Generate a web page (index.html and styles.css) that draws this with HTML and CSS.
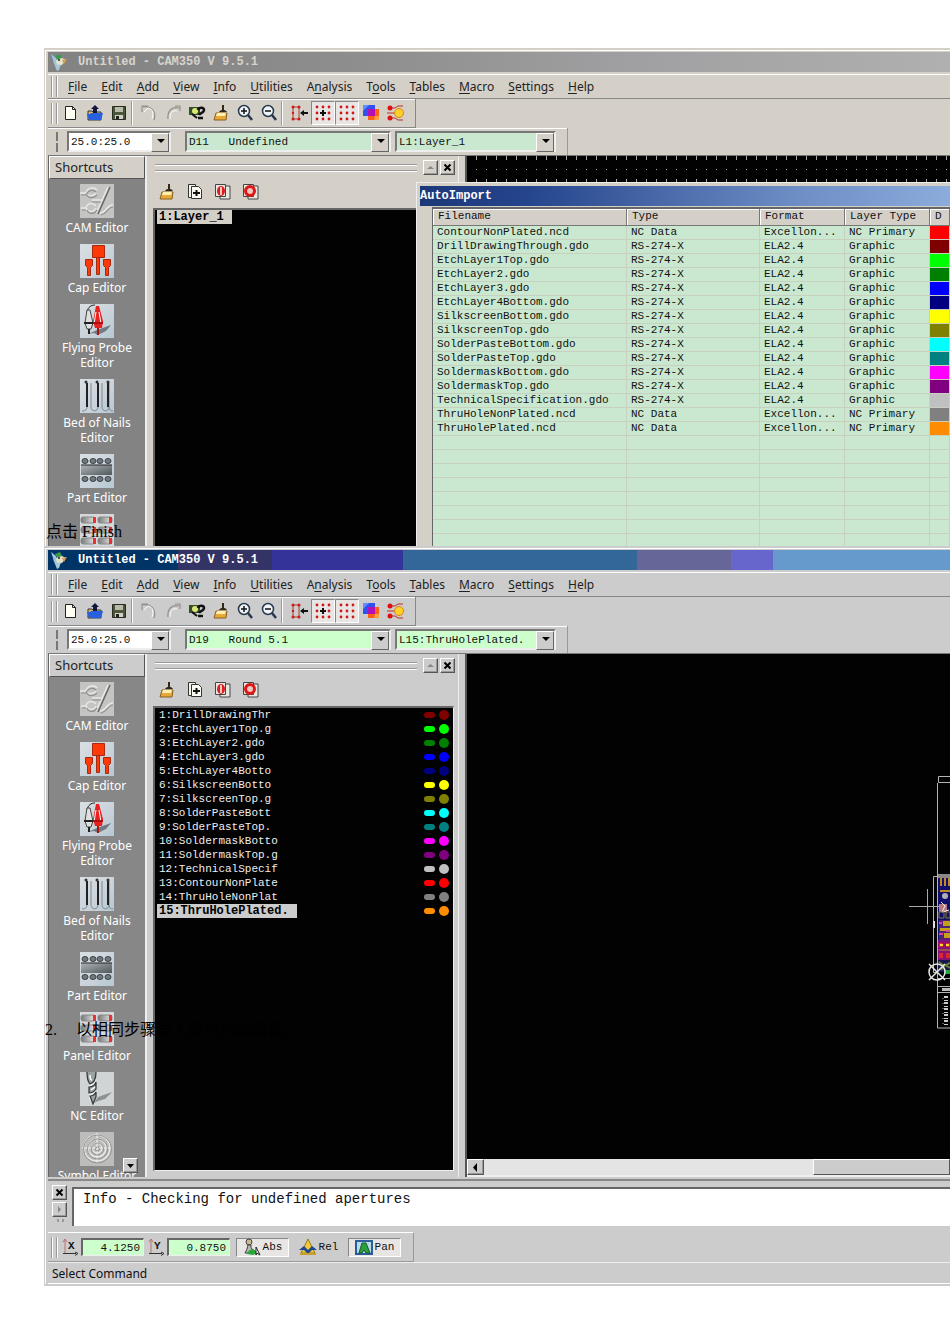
FILE: index.html
```html
<!DOCTYPE html>
<html lang="zh">
<head>
<meta charset="utf-8">
<title>CAM350 import steps</title>
<link rel="stylesheet" href="styles.css">
</head>
<body>
<svg class="sprite" aria-hidden="true">
  <defs>
    <linearGradient id="tile" x1="0" y1="0" x2="1" y2="1"><stop offset="0" stop-color="#d9e0e4"/><stop offset=".6" stop-color="#c9d2da"/><stop offset="1" stop-color="#b4c8d4"/></linearGradient>
    <linearGradient id="metal"><stop offset="0" stop-color="#777"/><stop offset="1" stop-color="#e8e8e8"/></linearGradient>
    <linearGradient id="chip" x1="0" y1="0" x2="1" y2="1"><stop offset="0" stop-color="#aeb4b8"/><stop offset="1" stop-color="#50585c"/></linearGradient>
  </defs>
  <symbol id="i-app" viewBox="0 0 18 18"><path d="M1 1l5 4 3 10-5-5z" fill="#9cc4e4"/><path d="M5 3l5-2 2 4-4 3z" fill="#3c9a4c"/><path d="M6 7l6-2 4 2-4 5-5 1z" fill="#e6e2c8"/><path d="M3 8l5 4 3-1-2 6-2 1z" fill="#a8c8d8"/><path d="M12 7l5-1-3 5z" fill="#d89a48"/><circle cx="9" cy="7" r="1" fill="#222"/></symbol>
  <symbol id="i-new" viewBox="0 0 18 18"><path d="M3.500 2.500h7l3 3v10h-10z" fill="#fffff4" stroke="#222"/><path d="M10.500 2.500v3h3" fill="none" stroke="#222"/></symbol>
  <symbol id="i-open" viewBox="0 0 18 18"><path d="M2 7h4l1 1h8v8H2z" fill="#d8b860" stroke="#333"/><path d="M1 10h3l1-1h12l-2 7H3z" fill="#2860e0"/><path d="M9 1l4 4h-2v4H7V5H5z" fill="#101840"/></symbol>
  <symbol id="i-save" viewBox="0 0 18 18"><path d="M2.500 2.500h13v13h-13z" fill="#4c5638" stroke="#282c20"/><path d="M5 3h8v5H5z" fill="#b8bca8"/><path d="M5 11h8v4H5z" fill="#d0d0c4"/><path d="M6 12h3v3H6z" fill="#222"/></symbol>
  <symbol id="i-undo" viewBox="0 0 18 18"><path d="M2 8V2h6M3 3c7-2 14 4 11 13" fill="none" stroke="#90908c" stroke-width="1.200"/><path d="M4 8l4-4c5 1 6 5 4 11" fill="none" stroke="#fff"/></symbol>
  <symbol id="i-redo" viewBox="0 0 18 18"><path d="M11 2h5v5M15 4C8 2 3 7 4 15" fill="none" stroke="#90908c" stroke-width="1.200"/><path d="M13 7C8 6 6 9 6 15" fill="none" stroke="#fff"/></symbol>
  <symbol id="i-query" viewBox="0 0 18 18"><path d="M1 3h11v8H1z" fill="#354f28"/><circle cx="7" cy="7" r="3" fill="#dbe878"/><path d="M10 6c1-3 6-3 6 0 0 3-4 3-5 5M10 14h5" fill="none" stroke="#111" stroke-width="2.500"/><path d="M4 10l5 4" stroke="#111" stroke-width="2"/></symbol>
  <symbol id="i-broom" viewBox="0 0 18 18"><path d="M4 9h11l-1 7H2z" fill="#e8a838" stroke="#886020"/><path d="M5 9h9l-1 3H4z" fill="#fff0b0"/><path d="M11 1v7" stroke="#332818" stroke-width="2"/><path d="M7 8c2-3 6-3 8 0z" fill="#332818"/></symbol>
  <symbol id="i-zin" viewBox="0 0 18 18"><circle cx="8" cy="7" r="5.500" fill="#eef4f8" stroke="#26384c" stroke-width="1.500"/><path d="M5 7h6M8 4v6" stroke="#111" stroke-width="1.500"/><path d="M12 11l4 5" stroke="#26384c" stroke-width="2.500"/></symbol>
  <symbol id="i-zout" viewBox="0 0 18 18"><circle cx="8" cy="7" r="5.500" fill="#eef4f8" stroke="#26384c" stroke-width="1.500"/><path d="M5 7h6" stroke="#111" stroke-width="1.500"/><path d="M12 11l4 5" stroke="#26384c" stroke-width="2.500"/></symbol>
  <symbol id="i-snap" viewBox="0 0 18 18"><path d="M3 3h6v12H3z" fill="none" stroke="#a84038"/><g fill="#d01818"><circle cx="3" cy="3" r="1.500"/><circle cx="9" cy="3" r="1.500"/><circle cx="3" cy="15" r="1.500"/><circle cx="9" cy="15" r="1.500"/><circle cx="3" cy="9" r="1.200"/></g><path d="M10 9l4-3v2h4v2h-4v2z" fill="#111"/></symbol>
  <symbol id="i-grid" viewBox="0 0 18 18"><path d="M3 3h13M3 9h13M3 15h13" stroke="#d01818" stroke-width="2.800" stroke-dasharray="0 6" stroke-linecap="round"/></symbol>
  <symbol id="i-gridc" viewBox="0 0 18 18"><path d="M3 3h13M3 9h13M3 15h13" stroke="#d01818" stroke-width="2.800" stroke-dasharray="0 6" stroke-linecap="round"/><path d="M6 9h6M9 6v6" stroke="#111" stroke-width="2"/></symbol>
  <symbol id="i-layers" viewBox="0 0 18 18"><path d="M1 1h12v11H1z" fill="#3050f0"/><path d="M1 7l6-6H1z" fill="#6090ff"/><path d="M6 5h11v11H6z" fill="#ff6018"/><path d="M6 5h7v7H6z" fill="#b010b8"/><path d="M13 12h4v4h-5z" fill="#ffa040"/></symbol>
  <symbol id="i-nodes" viewBox="0 0 18 18"><path d="M4 4h5l3-2h5M4 14h5l3 2h5M1 9h8" fill="none" stroke="#b83020"/><circle cx="4" cy="4" r="2.500" fill="#e01010"/><circle cx="4" cy="14" r="2.500" fill="#e01010"/><circle cx="13" cy="9" r="4.500" fill="#ffd028" stroke="#e08018"/></symbol>
  <symbol id="i-addl" viewBox="0 0 18 18"><path d="M2.500 1.500h7v13h-7z" fill="#f4f4e8" stroke="#333"/><path d="M5.500 3.500h7l3 3v9h-10z" fill="#fbfbf4" stroke="#333"/><path d="M7 10h7M10.500 7v6" stroke="#111" stroke-width="2"/></symbol>
  <symbol id="i-redl" viewBox="0 0 18 18"><path d="M1.500 1.500h10v12h-10zM12 3h4v13H6v-2" fill="#e8e8e0" stroke="#444"/><ellipse cx="7" cy="8" rx="4" ry="5" fill="#d82020"/><path d="M7 4v8" stroke="#fff" stroke-width="1.500"/></symbol>
  <symbol id="i-nol" viewBox="0 0 18 18"><path d="M1.500 1.500h10v12h-10zM12 3h4v13H6v-2" fill="#e8e8e0" stroke="#444"/><circle cx="8" cy="8" r="4.500" fill="#f0c8c0" stroke="#dc1818" stroke-width="3"/></symbol>
  <symbol id="i-cam" viewBox="0 0 34 34"><path d="M0 0h34v34H0z" fill="#c4c4c2"/><g fill="none" stroke="#e8e8e8" stroke-width="1.500"><path d="M0 9h6c1-5 7-7 11-3M6 9c2 4 8 3 10 0M1 24h5c1-5 7-6 10-2M6 24c2 5 8 4 10 0M33 21c-6-1-6 8-13 8M28 3L16 29M12 16h10"/></g><g fill="none" stroke="#909090" stroke-width="1.200"><path d="M1 11h5c2-5 7-6 10-3M7 11c2 4 7 3 10 0M2 26h4M7 26c2 5 8 4 10 0M33 23c-5 0-6 7-12 8M12 18h9"/></g><path d="M30 3L18 30" stroke="#666" stroke-width="1.500"/></symbol>
  <symbol id="i-cap" viewBox="0 0 34 34"><path d="M0 0h34v34H0z" fill="url(#tile)"/><g fill="#fb3a08" stroke="#a82810"><path d="M12.500 1.500h12v12h-12zM16.500 13.500h3v17h-3zM5.500 15.500h7v6l-2 2v8h-3v-8l-2-2zM23.500 15.500h7v6l-2 2v8h-3v-8l-2-2z"/></g></symbol>
  <symbol id="i-probe" viewBox="0 0 34 34"><path d="M0 0h34v34H0z" fill="url(#tile)"/><path d="M8 30l9-4 14-5-5 6-8 4-4-2z" fill="#707a80"/><path d="M7 8c1-5 4-7 8-7" fill="none" stroke="#222"/><path d="M7 6h3l3 13-2 6h-4l-2-6z" fill="#e0e0e0" stroke="#444"/><path d="M4 19h9M9 25v5" stroke="#222" stroke-width="2"/><path d="M16 2h3l4 15-1 7h-7l-2-7z" fill="#e82020"/><path d="M16 8l-2 12M19 8l2 12" stroke="#fff"/><path d="M13 19h10M18 24v7" stroke="#b01010" stroke-width="2"/></symbol>
  <symbol id="i-nails" viewBox="0 0 34 34"><path d="M0 0h34v34H0z" fill="url(#tile)"/><path d="M2 32c4 0 5-2 5-4V4M11 4v24c0 5 7 5 7 0V4M22 4v24c0 5 7 5 7 0V4M29 28c0 3 2 4 4 4" fill="none" stroke="#7d878e"/><path d="M7 4v24M18 4v24M28 4v24" stroke="#222" stroke-width="2"/><g fill="#333"><circle cx="6" cy="3" r="1.500"/><circle cx="17" cy="3" r="1.500"/><circle cx="28" cy="3" r="1.500"/></g></symbol>
  <symbol id="i-part" viewBox="0 0 34 34"><path d="M0 0h34v34H0z" fill="url(#tile)"/><path d="M1 11h31v10H1z" fill="url(#chip)"/><path d="M1 11h31" stroke="#222"/><g fill="#727a80" stroke="#3c4448"><ellipse cx="5" cy="7" rx="3" ry="2.500"/><ellipse cx="13" cy="7" rx="3" ry="2.500"/><ellipse cx="20" cy="7" rx="3" ry="2.500"/><ellipse cx="28" cy="7" rx="3" ry="2.500"/><ellipse cx="5" cy="25" rx="3" ry="2.500"/><ellipse cx="13" cy="25" rx="3" ry="2.500"/><ellipse cx="20" cy="25" rx="3" ry="2.500"/><ellipse cx="28" cy="25" rx="3" ry="2.500"/></g></symbol>
  <symbol id="i-panel" viewBox="0 0 34 34"><path d="M0 0h34v34H0z" fill="#d4d8da"/><g fill="url(#metal)" stroke="#888"><rect x="1" y="3" width="14" height="6" rx="2"/><rect x="18" y="3" width="14" height="6" rx="2"/><rect x="1" y="13" width="14" height="6" rx="2"/><rect x="18" y="13" width="14" height="6" rx="2"/><rect x="1" y="24" width="14" height="6" rx="2"/><rect x="18" y="24" width="14" height="6" rx="2"/></g><path d="M13 3h3v6h-3zM29 3h3v6h-3zM13 13h3v6h-3zM29 13h3v6h-3zM13 24h3v6h-3zM29 24h3v6h-3z" fill="#e83030"/></symbol>
  <symbol id="i-nc" viewBox="0 0 34 34"><path d="M0 0h34v34H0z" fill="#d0d4d4"/><path d="M14 31l4-6 14-5-7 7-7 2z" fill="#8c9292"/><path d="M7 0h9v8l-1 6v10l-2 7-4-4V12z" fill="#f0f0f0"/><path d="M7 0c0 6 1 10 3 12 4-1 6-5 6-12M9 15c4 0 6-2 7-5v7c-2 3-4 4-7 4zM10 24c3 0 5-2 6-4v5l-3 7z" fill="#9aa2a2" stroke="#303636" stroke-width="1.200"/><path d="M10 3c0 3 1 5 2 5M11 18l4-3" fill="none" stroke="#fff" stroke-width="1.500"/></symbol>
  <symbol id="i-symbol" viewBox="0 0 34 34"><path d="M0 0h34v34H0z" fill="#bcbcba"/><g fill="none" stroke="#e8e8e8" stroke-width="1.500"><circle cx="17" cy="16" r="13"/><circle cx="17" cy="16" r="9"/><circle cx="17" cy="16" r="5"/><path d="M17 1v30M2 16h30"/></g><g fill="none" stroke="#929292"><circle cx="17.500" cy="17" r="14"/><circle cx="17.500" cy="17" r="10"/><circle cx="17.500" cy="17" r="6"/><circle cx="17.500" cy="17" r="2"/></g></symbol>
  <symbol id="i-x" viewBox="0 0 9 9"><path d="M1.500 1.500l6 6M7.500 1.500l-6 6" stroke="#000" stroke-width="2"/></symbol>
  <symbol id="i-up" viewBox="0 0 9 9"><path d="M1 6l3.500-3L8 6z" fill="#888"/></symbol>
  <symbol id="i-right" viewBox="0 0 9 9"><path d="M3 1l3 3.500L3 8z" fill="#888"/></symbol>
  <symbol id="i-left" viewBox="0 0 9 9"><path d="M6 0L2 4.500 6 9z" fill="#000"/></symbol>
  <symbol id="i-down" viewBox="0 0 9 9"><path d="M1 3h7L4.500 7z" fill="#000"/></symbol>
  <symbol id="i-axis" viewBox="0 0 18 18"><path d="M4 16V2M2 4l2-3 2 3" fill="none" stroke="#b87070"/><path d="M2 15.500h13M14 14l3 1.500-3 2" fill="none" stroke="#333"/></symbol>
  <symbol id="i-abs" viewBox="0 0 18 18"><circle cx="6" cy="4" r="3" fill="#c8b890" stroke="#444"/><path d="M5 7h3v3l6 5H2l2-4z" fill="#b8b8b0" stroke="#444"/><path d="M4 16c3-7 8-5 10-1l-4 2z" fill="#28a838"/><path d="M13 9l4 8-3-2-1 2z" fill="#fff" stroke="#222"/></symbol>
  <symbol id="i-rel" viewBox="0 0 18 18"><path d="M9 1l7 14H2z" fill="#f0c838" stroke="#987818"/><path d="M0 12l5-4 4 4 4-4 5 4-5 0-4 4-4-4z" fill="#204890"/><path d="M1 15h16v2H1z" fill="#c8a030"/></symbol>
  <symbol id="i-pan" viewBox="0 0 18 18"><path d="M0 2h18v15H0z" fill="#2c5c9c"/><path d="M2 4h14v11H2z" fill="#b8dce8"/><path d="M4 15L7 5h4l4 10h-4l-2-3-2 3z" fill="#28a040" stroke="#185828"/></symbol>
</svg>

<main class="page">
<section class="window window-old">
  <header class="titlebar"><svg class="ico"><use href="#i-app"/></svg><h1>Untitled - CAM350 V 9.5.1</h1></header>
  <nav class="menubar"><span class="grip"></span>
    <a href="#"><u>F</u>ile</a><a href="#"><u>E</u>dit</a><a href="#"><u>A</u>dd</a><a href="#"><u>V</u>iew</a><a href="#"><u>I</u>nfo</a><a href="#"><u>U</u>tilities</a><a href="#">A<u>n</u>alysis</a><a href="#">T<u>o</u>ols</a><a href="#"><u>T</u>ables</a><a href="#"><u>M</u>acro</a><a href="#"><u>S</u>ettings</a><a href="#"><u>H</u>elp</a>
  </nav>
  <div class="toolbar"><span class="grip"></span>
    <button aria-label="New"><svg class="ico"><use href="#i-new"/></svg></button><button aria-label="Open"><svg class="ico"><use href="#i-open"/></svg></button><button aria-label="Save"><svg class="ico"><use href="#i-save"/></svg></button><span class="sep"></span>
    <button aria-label="Undo"><svg class="ico"><use href="#i-undo"/></svg></button><button aria-label="Redo"><svg class="ico"><use href="#i-redo"/></svg></button><button aria-label="Query"><svg class="ico"><use href="#i-query"/></svg></button><button aria-label="Redraw"><svg class="ico"><use href="#i-broom"/></svg></button><button aria-label="Zoom in"><svg class="ico"><use href="#i-zin"/></svg></button><button aria-label="Zoom out"><svg class="ico"><use href="#i-zout"/></svg></button><span class="sep"></span>
    <button aria-label="Object snap"><svg class="ico"><use href="#i-snap"/></svg></button><button class="pressed" aria-label="Grid snap"><svg class="ico"><use href="#i-gridc"/></svg></button><button class="pressed" aria-label="Grid"><svg class="ico"><use href="#i-grid"/></svg></button><button aria-label="Layers"><svg class="ico"><use href="#i-layers"/></svg></button><button aria-label="Nets"><svg class="ico"><use href="#i-nodes"/></svg></button>
  </div>
  <div class="combobar"><span class="minigrip"></span>
    <span class="combo combo-grid"><select aria-label="Grid size"><option>25.0:25.0</option></select></span>
    <span class="combo combo-dcode"><select aria-label="D-code"><option>D11&nbsp;&nbsp;&nbsp;Undefined</option></select></span>
    <span class="combo combo-layer"><select aria-label="Layer"><option>L1:Layer_1</option></select></span>
  </div>
  <div class="workspace">
    <aside class="shortcuts"><h2>Shortcuts</h2>
      <ul>
        <li><svg><use href="#i-cam"/></svg>CAM Editor</li>
        <li><svg><use href="#i-cap"/></svg>Cap Editor</li>
        <li><svg><use href="#i-probe"/></svg>Flying Probe<br>Editor</li>
        <li><svg><use href="#i-nails"/></svg>Bed of Nails<br>Editor</li>
        <li><svg><use href="#i-part"/></svg>Part Editor</li>
        <li><svg><use href="#i-panel"/></svg></li>
      </ul>
    </aside>
    <section class="layers">
      <div class="dockhead"><span class="rails"></span><button class="mini" aria-label="Collapse"><svg><use href="#i-up"/></svg></button><button class="mini" aria-label="Close"><svg><use href="#i-x"/></svg></button></div>
      <div class="layertools"><button aria-label="Redraw"><svg class="ico"><use href="#i-broom"/></svg></button><button aria-label="Add layer"><svg class="ico"><use href="#i-addl"/></svg></button><button aria-label="Show layers"><svg class="ico"><use href="#i-redl"/></svg></button><button aria-label="Hide layers"><svg class="ico"><use href="#i-nol"/></svg></button></div>
      <ol class="layerlist"><li class="current"><span>1:Layer_1</span></li></ol>
    </section>
    <div class="canvas dotted"></div>
    <section class="dialog">
      <h2>AutoImport</h2>
      <table>
        <colgroup><col class="c-file"><col class="c-type"><col class="c-format"><col class="c-layer"><col></colgroup>
        <thead><tr><th>Filename</th><th>Type</th><th>Format</th><th>Layer Type</th><th>D</th></tr></thead>
        <tbody>
        <tr><td>ContourNonPlated.ncd</td><td>NC Data</td><td>Excellon...</td><td>NC Primary</td><td class="red"></td></tr>
        <tr><td>DrillDrawingThrough.gdo</td><td>RS-274-X</td><td>ELA2.4</td><td>Graphic</td><td class="maroon"></td></tr>
        <tr><td>EtchLayer1Top.gdo</td><td>RS-274-X</td><td>ELA2.4</td><td>Graphic</td><td class="lime"></td></tr>
        <tr><td>EtchLayer2.gdo</td><td>RS-274-X</td><td>ELA2.4</td><td>Graphic</td><td class="green"></td></tr>
        <tr><td>EtchLayer3.gdo</td><td>RS-274-X</td><td>ELA2.4</td><td>Graphic</td><td class="blue"></td></tr>
        <tr><td>EtchLayer4Bottom.gdo</td><td>RS-274-X</td><td>ELA2.4</td><td>Graphic</td><td class="navy"></td></tr>
        <tr><td>SilkscreenBottom.gdo</td><td>RS-274-X</td><td>ELA2.4</td><td>Graphic</td><td class="yellow"></td></tr>
        <tr><td>SilkscreenTop.gdo</td><td>RS-274-X</td><td>ELA2.4</td><td>Graphic</td><td class="olive"></td></tr>
        <tr><td>SolderPasteBottom.gdo</td><td>RS-274-X</td><td>ELA2.4</td><td>Graphic</td><td class="aqua"></td></tr>
        <tr><td>SolderPasteTop.gdo</td><td>RS-274-X</td><td>ELA2.4</td><td>Graphic</td><td class="teal"></td></tr>
        <tr><td>SoldermaskBottom.gdo</td><td>RS-274-X</td><td>ELA2.4</td><td>Graphic</td><td class="magenta"></td></tr>
        <tr><td>SoldermaskTop.gdo</td><td>RS-274-X</td><td>ELA2.4</td><td>Graphic</td><td class="purple"></td></tr>
        <tr><td>TechnicalSpecification.gdo</td><td>RS-274-X</td><td>ELA2.4</td><td>Graphic</td><td class="silver"></td></tr>
        <tr><td>ThruHoleNonPlated.ncd</td><td>NC Data</td><td>Excellon...</td><td>NC Primary</td><td class="gray"></td></tr>
        <tr><td>ThruHolePlated.ncd</td><td>NC Data</td><td>Excellon...</td><td>NC Primary</td><td class="orange"></td></tr>
        <tr><td></td><td></td><td></td><td></td><td></td></tr><tr><td></td><td></td><td></td><td></td><td></td></tr><tr><td></td><td></td><td></td><td></td><td></td></tr><tr><td></td><td></td><td></td><td></td><td></td></tr><tr><td></td><td></td><td></td><td></td><td></td></tr><tr><td></td><td></td><td></td><td></td><td></td></tr><tr><td></td><td></td><td></td><td></td><td></td></tr><tr><td></td><td></td><td></td><td></td><td></td></tr>
        </tbody>
      </table>
    </section>
  </div>
  <p class="note note-finish">点击 Finish</p>
</section>

<section class="window window-new">
  <header class="titlebar"><svg class="ico"><use href="#i-app"/></svg><h1>Untitled - CAM350 V 9.5.1</h1></header>
  <nav class="menubar"><span class="grip"></span>
    <a href="#"><u>F</u>ile</a><a href="#"><u>E</u>dit</a><a href="#"><u>A</u>dd</a><a href="#"><u>V</u>iew</a><a href="#"><u>I</u>nfo</a><a href="#"><u>U</u>tilities</a><a href="#">A<u>n</u>alysis</a><a href="#">T<u>o</u>ols</a><a href="#"><u>T</u>ables</a><a href="#"><u>M</u>acro</a><a href="#"><u>S</u>ettings</a><a href="#"><u>H</u>elp</a>
  </nav>
  <div class="toolbar"><span class="grip"></span>
    <button aria-label="New"><svg class="ico"><use href="#i-new"/></svg></button><button aria-label="Open"><svg class="ico"><use href="#i-open"/></svg></button><button aria-label="Save"><svg class="ico"><use href="#i-save"/></svg></button><span class="sep"></span>
    <button aria-label="Undo"><svg class="ico"><use href="#i-undo"/></svg></button><button aria-label="Redo"><svg class="ico"><use href="#i-redo"/></svg></button><button aria-label="Query"><svg class="ico"><use href="#i-query"/></svg></button><button aria-label="Redraw"><svg class="ico"><use href="#i-broom"/></svg></button><button aria-label="Zoom in"><svg class="ico"><use href="#i-zin"/></svg></button><button aria-label="Zoom out"><svg class="ico"><use href="#i-zout"/></svg></button><span class="sep"></span>
    <button aria-label="Object snap"><svg class="ico"><use href="#i-snap"/></svg></button><button class="pressed" aria-label="Grid snap"><svg class="ico"><use href="#i-gridc"/></svg></button><button class="pressed" aria-label="Grid"><svg class="ico"><use href="#i-grid"/></svg></button><button aria-label="Layers"><svg class="ico"><use href="#i-layers"/></svg></button><button aria-label="Nets"><svg class="ico"><use href="#i-nodes"/></svg></button>
  </div>
  <div class="combobar"><span class="minigrip"></span>
    <span class="combo combo-grid"><select aria-label="Grid size"><option>25.0:25.0</option></select></span>
    <span class="combo combo-dcode"><select aria-label="D-code"><option>D19&nbsp;&nbsp;&nbsp;Round 5.1</option></select></span>
    <span class="combo combo-layer"><select aria-label="Layer"><option>L15:ThruHolePlated.</option></select></span>
  </div>
  <div class="workspace">
    <aside class="shortcuts"><h2>Shortcuts</h2>
      <ul>
        <li><svg><use href="#i-cam"/></svg>CAM Editor</li>
        <li><svg><use href="#i-cap"/></svg>Cap Editor</li>
        <li><svg><use href="#i-probe"/></svg>Flying Probe<br>Editor</li>
        <li><svg><use href="#i-nails"/></svg>Bed of Nails<br>Editor</li>
        <li><svg><use href="#i-part"/></svg>Part Editor</li>
        <li><svg><use href="#i-panel"/></svg>Panel Editor</li>
        <li><svg><use href="#i-nc"/></svg>NC Editor</li>
        <li><svg><use href="#i-symbol"/></svg>Symbol Editor</li>
      </ul>
      <button class="mini scrolldown" aria-label="Scroll down"><svg><use href="#i-down"/></svg></button>
    </aside>
    <section class="layers">
      <div class="dockhead"><span class="rails"></span><button class="mini" aria-label="Collapse"><svg><use href="#i-up"/></svg></button><button class="mini" aria-label="Close"><svg><use href="#i-x"/></svg></button></div>
      <div class="layertools"><button aria-label="Redraw"><svg class="ico"><use href="#i-broom"/></svg></button><button aria-label="Add layer"><svg class="ico"><use href="#i-addl"/></svg></button><button aria-label="Show layers"><svg class="ico"><use href="#i-redl"/></svg></button><button aria-label="Hide layers"><svg class="ico"><use href="#i-nol"/></svg></button></div>
      <ol class="layerlist">
        <li><span>1:DrillDrawingThr</span><i class="pill maroon"></i><i class="dot maroon"></i></li>
        <li><span>2:EtchLayer1Top.g</span><i class="pill lime"></i><i class="dot lime"></i></li>
        <li><span>3:EtchLayer2.gdo</span><i class="pill green"></i><i class="dot green"></i></li>
        <li><span>4:EtchLayer3.gdo</span><i class="pill blue"></i><i class="dot blue"></i></li>
        <li><span>5:EtchLayer4Botto</span><i class="pill navy"></i><i class="dot navy"></i></li>
        <li><span>6:SilkscreenBotto</span><i class="pill yellow"></i><i class="dot yellow"></i></li>
        <li><span>7:SilkscreenTop.g</span><i class="pill olive"></i><i class="dot olive"></i></li>
        <li><span>8:SolderPasteBott</span><i class="pill aqua"></i><i class="dot aqua"></i></li>
        <li><span>9:SolderPasteTop.</span><i class="pill teal"></i><i class="dot teal"></i></li>
        <li><span>10:SoldermaskBotto</span><i class="pill magenta"></i><i class="dot magenta"></i></li>
        <li><span>11:SoldermaskTop.g</span><i class="pill purple"></i><i class="dot purple"></i></li>
        <li><span>12:TechnicalSpecif</span><i class="pill silver"></i><i class="dot silver"></i></li>
        <li><span>13:ContourNonPlate</span><i class="pill red"></i><i class="dot red"></i></li>
        <li><span>14:ThruHoleNonPlat</span><i class="pill gray"></i><i class="dot gray"></i></li>
        <li class="current"><span>15:ThruHolePlated.</span><i class="pill orange"></i><i class="dot orange"></i></li>
      </ol>
    </section>
    <div class="canvas">
      <svg class="board" viewBox="0 0 42 260" aria-label="Board drawing">
        <g fill="none" stroke="#b4b4b4"><path d="M42 6.500H30.500v6H42M29.500 13v245H42M42 106.500H25.500v96H29M42 208.500H30M42 216.500H30M42 222.500H30"/></g>
        <path d="M30 104h12v4H30z" fill="#888"/>
        <path d="M30 108h12v88H30z" fill="#10106c"/>
        <g stroke="#c08828" stroke-width="2"><path d="M33 108v8M37 108v8M41 108v8M32 121h10" /></g>
        <circle cx="37" cy="126" r="3" fill="#b0b0b0"/><path d="M31 134h8v8h-8z" fill="#b87880"/><path d="M33 132l4 4-3 6 7-2" stroke="#eee" fill="none"/>
        <path d="M31 142h5v6h-5zM38 142h4v6h-4z" fill="none" stroke="#887830"/>
        <path d="M31 150h11v20H31z" fill="#502078"/><path d="M35 151h7v5h-7zM32 158h10v3H32zM36 163h6v5h-6z" fill="#c4a018"/><path d="M31 153h3M31 164h4M38 161h4" stroke="#e040a0" stroke-width="2"/>
        <path d="M30 170h12v20H30z" fill="#8a1078"/><path d="M31 173h4v4h-4zM38 173h4v4h-4zM31 183h4v5h-4zM38 183h4v5h-4z" fill="#d82830"/><path d="M32 175h3M38 175h3" stroke="#ffd820" stroke-width="2"/><path d="M31 180h11" stroke="#a89020"/>
        <path d="M30 190h12v12H30z" fill="#16164c"/><path d="M31 192l5 4 6-3M33 200l4-5 5 3" stroke="#688030" stroke-width="2" fill="none"/><path d="M37 200h5v4h-5z" fill="#20a840"/>
        <path d="M34 218h8v3h-8z" fill="#bbb"/><path d="M26 151v7" stroke="#ddd" stroke-width="2"/>
        <path d="M38 226v30" stroke="#ccc" stroke-width="4" stroke-dasharray="2 2 1 1"/><path d="M35 228v27" stroke="#aaa" stroke-dasharray="1 4"/>
        <path d="M1 136.500h31M19.500 119v35" stroke="#aaa"/>
        <circle cx="29" cy="202" r="8" fill="none" stroke="#e8e8e8" stroke-width="1.500"/><path d="M21 194l16 16M37 194l-16 16" stroke="#e8e8e8" stroke-width="1.500"/>
      </svg>
      <div class="hscroll"><button class="mini" aria-label="Scroll left"><svg><use href="#i-left"/></svg></button><span class="track"></span><span class="thumb"></span></div>
    </div>
  </div>
  <p class="note note-step"><span class="num">2.</span>以相同步骤导入要拼的线路板。</p>
  <div class="console">
    <div class="consolebtns"><button class="mini" aria-label="Close log"><svg><use href="#i-x"/></svg></button><button class="mini" aria-label="Expand log"><svg><use href="#i-right"/></svg></button><span class="dockmark"></span></div>
    <output>Info - Checking for undefined apertures</output>
  </div>
  <div class="coordbar"><span class="grip"></span>
    <label class="axis" for="cx"><svg class="ico"><use href="#i-axis"/></svg><b>X</b></label><input id="cx" value="4.1250">
    <label class="axis" for="cy"><svg class="ico"><use href="#i-axis"/></svg><b>Y</b></label><input id="cy" value="0.8750">
    <button class="mode pressed"><svg class="ico"><use href="#i-abs"/></svg>Abs</button>
    <button class="mode"><svg class="ico"><use href="#i-rel"/></svg>Rel</button>
    <button class="mode pressed"><svg class="ico"><use href="#i-pan"/></svg>Pan</button>
  </div>
  <footer class="status">Select Command</footer>
</section>
</main>
</body>
</html>
```
FILE: styles.css
```css
* { box-sizing: border-box; }
body { margin: 0; background: #fff; color: #111; font: 12px/15px "Noto Sans", sans-serif; overflow-x: hidden; }
h1, h2, ul, ol, p { margin: 0; padding: 0; list-style: none; font-weight: normal; }
button, input, select { font: inherit; color: inherit; margin: 0; padding: 0; border: 0; background: none; border-radius: 0; }
.sprite { position: absolute; width: 0; height: 0; }
.ico { display: block; width: 18px; height: 18px; flex: none; }
.page { padding: 48px 0 0 44px; }

.window { position: relative; border: solid var(--face); border-width: 2px 0 0 1px; padding: 2px 0 0 3px; background: var(--face); box-shadow: inset 1px 1px #fff; }
.window-old { --face: #d4d0c8; --field: #cae8d0; --side: #838383; }
.window-new { --face: #cccccc; --field: #ccffcc; --side: #878787; border-bottom-width: 2px; }

.titlebar { display: flex; align-items: center; gap: 10px; height: 20px; margin-bottom: 2px; padding-left: 2px; }
.titlebar h1 { font: bold 12px/20px "Liberation Mono", monospace; white-space: pre; }
.window-old .titlebar { background: linear-gradient(90deg, #828282, #8e8e8e 35%, #a0a0a2 65%, #b0b0b0); color: #d8d4cc; }
.window-new .titlebar { background: linear-gradient(90deg, #003366 0 130px, #333366 130px 224px, #333399 224px 355px, #336699 355px 589px, #666699 589px 683px, #6666cc 683px 725px, #6699cc 725px); color: #fff; }

.menubar { display: flex; align-items: center; height: 25px; border-top: 1px solid #fff; border-bottom: 1px solid #888; }
.menubar a { color: #222; text-decoration: none; padding: 0 7px; }
.menubar u { text-underline-offset: 2px; }
.grip { width: 6px; height: 21px; margin: 0 4px 0 3px; border: solid #999; border-width: 0 1px; box-shadow: inset 1px 0 #fff, 1px 0 #fff; flex: none; }

.toolbar { display: flex; align-items: center; width: max-content; height: 29px; padding-right: 8px; border: solid #888; border-width: 0 1px 1px 0; box-shadow: inset 0 1px #fff; }
.toolbar .grip { margin-right: 2px; }
.toolbar button { display: grid; place-items: center; width: 24px; height: 24px; }
.pressed { border: solid; border-width: 1px; border-color: #888 #fff #fff #888; background: #e8e6e4; }
.toolbar .pressed { border-style: solid; }
.sep { width: 6px; height: 24px; border-left: 1px solid #999; box-shadow: inset 1px 0 #fff; }

.combobar { display: flex; align-items: center; width: max-content; height: 27px; padding-right: 11px; border-right: 1px solid #999; box-shadow: inset 0 1px #fff; }
.minigrip { width: 2px; height: 20px; margin: 0 9px 0 8px; background: linear-gradient(#777 0 9px, transparent 9px 11px, #777 11px); }
.combo { position: relative; height: 21px; border: 2px solid; border-color: #777 #eee #eee #777; background: var(--field); font: 11px/15px "Liberation Mono", monospace; }
.combo select { appearance: none; display: block; width: 100%; height: 17px; padding: 2px 0 0 2px; outline: 0; }
.combo::before { content: ""; position: absolute; right: 0; top: 0; width: 16px; height: 17px; border: 1px solid; border-color: #fff #666 #666 #fff; background: var(--face); pointer-events: none; }
.combo::after { content: ""; position: absolute; right: 4px; top: 6px; border: 4px solid transparent; border-top-color: #000; border-bottom: 0; pointer-events: none; }
.combo-grid { width: 104px; margin-right: 14px; background: #fff; }
.combo-dcode { width: 206px; margin-right: 4px; }
.combo-layer { width: 161px; }

.workspace { position: relative; display: flex; border-top: 1px solid #777; overflow: hidden; }
.window-old .workspace { height: 391px; }
.window-new .workspace { height: 524px; }

.shortcuts { position: relative; flex: none; width: 99px; margin-right: 6px; background: var(--side); border-left: 1px solid #666; border-right: 2px solid #eee; color: #fff; overflow: hidden; text-align: center; }
.shortcuts h2 { height: 23px; padding-left: 5px; background: var(--face); color: #222; border: 1px solid; border-color: #fff #555 #555 #fff; font-size: 13px; line-height: 21px; text-align: left; }
.shortcuts ul { padding-top: 5px; }
.shortcuts li { margin-bottom: 9px; white-space: nowrap; }
.shortcuts li svg { display: block; width: 34px; height: 34px; margin: 0 auto 2px; }
.mini { display: grid; place-items: center; flex: none; width: 15px; height: 15px; background: var(--face); border: 1px solid; border-color: #fff #555 #555 #fff; box-shadow: inset -1px -1px #999; }
.mini svg { width: 9px; height: 9px; display: block; }
.scrolldown { position: absolute; right: 7px; bottom: 4px; }

.layers { flex: none; display: flex; flex-direction: column; width: 306px; padding: 3px 3px 6px 0; border-right: 1px solid #eee; }
.window-old .layers { padding-bottom: 0; }
.dockhead { display: flex; align-items: center; gap: 2px; height: 16px; }
.rails { flex: 1; height: 7px; margin: 0 4px 0 2px; border: solid #999; border-width: 1px 0; box-shadow: inset 0 1px #fff, 0 1px #fff; }
.layertools { display: flex; gap: 10px; padding: 8px 0 7px 5px; }
.layerlist { flex: 1; background: #020202; border: solid; border-width: 2px 1px 1px 2px; border-color: #666 #eee #eee #666; color: #eee; font: 11px/14px "Liberation Mono", monospace; margin-right: 1px; }
.window-old .layerlist { border-bottom: 0; }
.layerlist li { display: flex; align-items: center; padding: 0 4px 0 2px; height: 14px; }
.layerlist span { margin-right: auto; padding: 0 8px 0 2px; }
.layerlist .current span { background: var(--face); color: #000; font-size: 12px; font-weight: bold; }
.pill { width: 11px; height: 6px; border-radius: 3px; margin-right: 4px; }
.dot { width: 10px; height: 10px; border-radius: 50%; }

.canvas { position: relative; flex: 1; min-width: 0; margin-left: 6px; display: flex; flex-direction: column; justify-content: flex-end; background: #020202; border-left: 2px solid #555; }
.dotted { background: #020202 conic-gradient(#aaa 90deg, transparent 0) 9px -7px / 10px 10px; background: linear-gradient(#020202, #020202) 0 4px / 100% 9px no-repeat, linear-gradient(#020202, #020202) 0 14px / 100% 9px no-repeat, repeating-linear-gradient(90deg, #020202 0 9px, #aaa 9px 10px); background-color: #020202; }
.board { position: absolute; right: 0; top: 116px; width: 42px; height: 260px; }
.hscroll { display: flex; height: 18px; background: var(--face); border-bottom: 2px solid #eee; }
.hscroll .mini { width: 17px; height: 16px; }
.track { flex: 330; background: #e4e4e4; }
.thumb { flex: 135; background: var(--face); border: 1px solid; border-color: #fff #555 #555 #fff; }

.dialog { position: absolute; left: 368px; right: 0; top: 26px; bottom: 0; padding: 3px 0 0 3px; background: var(--face); border: solid #eee; border-width: 1px 0 0 1px; }
.dialog h2 { height: 20px; background: linear-gradient(90deg, #1c3878, #24448c 20%, #4868a8 45%, #6c8cc4 70%, #8cacdc); color: #fff; font: bold 12px/20px "Liberation Mono", monospace; margin-bottom: 1px; }
.dialog table { width: calc(100% - 12px); margin-left: 12px; table-layout: fixed; border-collapse: separate; border-spacing: 0; background: var(--field); border: solid #666; border-width: 2px 0 0 1px; font: 11px/13px "Liberation Mono", monospace; white-space: nowrap; }
.c-file { width: 194px; }
.c-type { width: 133px; }
.c-format { width: 85px; }
.c-layer { width: 85px; }
.dialog th { height: 17px; padding: 0 0 2px 5px; text-align: left; font-weight: normal; background: var(--face); border: solid #777; border-width: 0 1px 1px 0; box-shadow: inset 1px 1px #fff; }
.dialog td { height: 14px; padding: 0 0 0 4px; border: solid #c8d0c0; border-width: 0 1px 1px 0; overflow: hidden; }

.note { position: absolute; color: #000; font: 16px/20px "Liberation Serif", "Noto Sans CJK SC", serif; white-space: nowrap; }
.note-finish { left: 1px; bottom: 4px; }
.note-step { left: 0; top: 472px; }
.num { display: inline-block; width: 31px; }

.maroon { background: #800000; } .lime { background: #00ff00; } .green { background: #008000; }
.blue { background: #0000ff; } .navy { background: #000080; } .yellow { background: #ffff00; }
.olive { background: #808000; } .aqua { background: #00ffff; } .teal { background: #008080; }
.magenta { background: #ff00ff; } .purple { background: #800080; } .silver { background: #c0c0c0; }
.red { background: #ff0000; } .gray { background: #808080; } .orange { background: #ff8c00; }

.console { display: flex; gap: 5px; padding: 4px 0 6px 4px; margin-top: 2px; border-top: 2px solid #888; }
.consolebtns { display: flex; flex-direction: column; gap: 2px; }
.dockmark { width: 7px; height: 3px; margin-left: 5px; border: solid #999; border-width: 0 2px; }
.console output { flex: 1; height: 39px; padding-left: 9px; margin-top: 2px; background: #fff; border: solid #666; border-width: 2px 0 0 2px; font: 14px/20px "Liberation Mono", monospace; }

.coordbar { display: flex; align-items: center; width: max-content; height: 30px; padding-right: 12px; border: solid; border-width: 1px 1px 1px 0; border-color: #fff #999 #999; font: 11px/16px "Liberation Mono", monospace; }
.axis { position: relative; display: flex; align-items: center; width: 20px; height: 18px; }
.axis b { position: absolute; left: 7px; top: 0; }
.coordbar input { width: 63px; height: 18px; margin-right: 3px; padding-right: 3px; background: var(--field); border: solid; border-width: 2px 1px 1px 2px; border-color: #666 #eee #eee #666; text-align: right; }
.mode { display: flex; align-items: center; justify-content: center; gap: 2px; width: 53px; height: 19px; margin-left: 3px; }
.status { height: 22px; padding-left: 4px; line-height: 22px; border-top: 1px solid #eee; border-bottom: 1px solid #fff; }
```
